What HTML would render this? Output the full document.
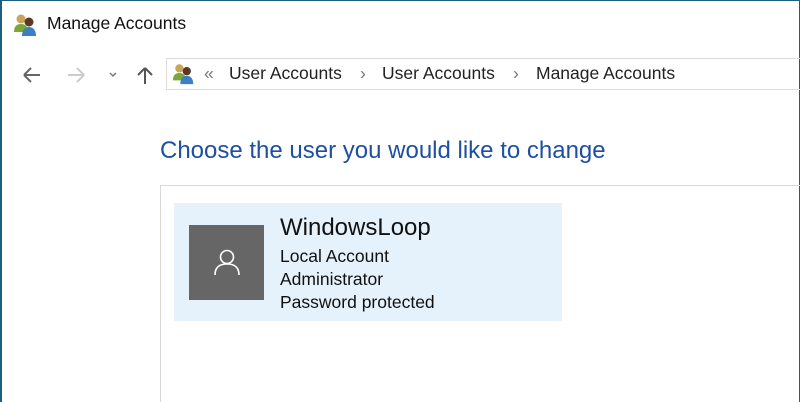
<!DOCTYPE html>
<html style="overflow:hidden;height:402px"><head><style>
body{margin:0;width:800px;height:402px;overflow:hidden;background:#fff;font-family:"Liberation Sans",sans-serif;position:relative}
.abs{position:absolute;white-space:nowrap}
.bl{position:absolute;left:0;top:0;width:2px;height:402px;background:#1f5f7e}
.bt{position:absolute;left:0;top:0;width:800px;height:1px;background:#1f5f7e}
.br{position:absolute;right:0;top:0;width:1px;height:402px;background:#1f5f7e}
</style></head><body>
<div class="bl"></div><div class="bt"></div><div class="br"></div>
<svg class="abs" style="left:13px;top:12px" width="26" height="24" viewBox="0 0 26 24">
<circle cx="8" cy="7" r="4.5" fill="#c9a55a"/><path d="M1 20c0-6 3-8 7-8s7 2 7 8z" fill="#7aa63a"/>
<circle cx="16" cy="10" r="4.5" fill="#5a3a22"/><path d="M9 24c0-6 3-9 7-9s7 3 7 9z" fill="#3d7fc0"/></svg>
<div class="abs" style="left:47px;top:13px;font-size:17.5px;color:#111">Manage Accounts</div>
<svg class="abs" style="left:20px;top:64px" width="140" height="22" viewBox="0 0 140 22">
<path d="M4 11h16M4 11l7-7M4 11l7 7" stroke="#666" stroke-width="2" fill="none"/>
<path d="M64 11H48M64 11l-7-7M64 11l-7 7" stroke="#ccc" stroke-width="2" fill="none"/>
<path d="M90 9l3 3 3-3" stroke="#777" stroke-width="1.5" fill="none"/>
<path d="M125 20V4M125 4l-7 7M125 4l7 7" stroke="#555" stroke-width="2" fill="none"/></svg>
<div class="abs" style="left:166px;top:58px;width:640px;height:32px;border:1px solid #ddd;box-sizing:border-box"></div>
<svg class="abs" style="left:172px;top:61px" width="24" height="24" viewBox="0 0 26 24">
<circle cx="8" cy="7" r="4.5" fill="#c9a55a"/><path d="M1 20c0-6 3-8 7-8s7 2 7 8z" fill="#7aa63a"/>
<circle cx="16" cy="10" r="4.5" fill="#5a3a22"/><path d="M9 24c0-6 3-9 7-9s7 3 7 9z" fill="#3d7fc0"/></svg>
<div class="abs" style="left:204px;top:63px;font-size:17.5px;color:#222"><span style="color:#777">«</span><span style="position:absolute;left:25px">User Accounts</span><span style="position:absolute;left:156px;color:#777">›</span><span style="position:absolute;left:178px">User Accounts</span><span style="position:absolute;left:309px;color:#777">›</span><span style="position:absolute;left:332px">Manage Accounts</span></div>
<div class="abs" style="left:160px;top:137px;font-size:24px;color:#1e4fa3">Choose the user you would like to change</div>
<div class="abs" style="left:160px;top:185px;width:640px;height:217px;border:1px solid #d8d8d8;border-right:none;border-bottom:none;box-sizing:border-box"></div>
<div class="abs" style="left:174px;top:203px;width:388px;height:118px;background:#e5f1fb"></div>
<div class="abs" style="left:189px;top:225px;width:75px;height:75px;background:#666"></div>
<svg class="abs" style="left:208px;top:244px" width="38" height="38" viewBox="0 0 38 38">
<circle cx="19" cy="13" r="6.5" stroke="#fff" stroke-width="1.6" fill="none"/>
<path d="M7 31c0-8 5-11 12-11s12 3 12 11" stroke="#fff" stroke-width="1.6" fill="none"/></svg>
<div class="abs" style="left:280px;top:214px;font-size:24px;color:#111">WindowsLoop</div>
<div class="abs" style="left:280px;top:245px;font-size:17.5px;color:#111;line-height:23px">Local Account<br>Administrator<br>Password protected</div>
</body></html>
